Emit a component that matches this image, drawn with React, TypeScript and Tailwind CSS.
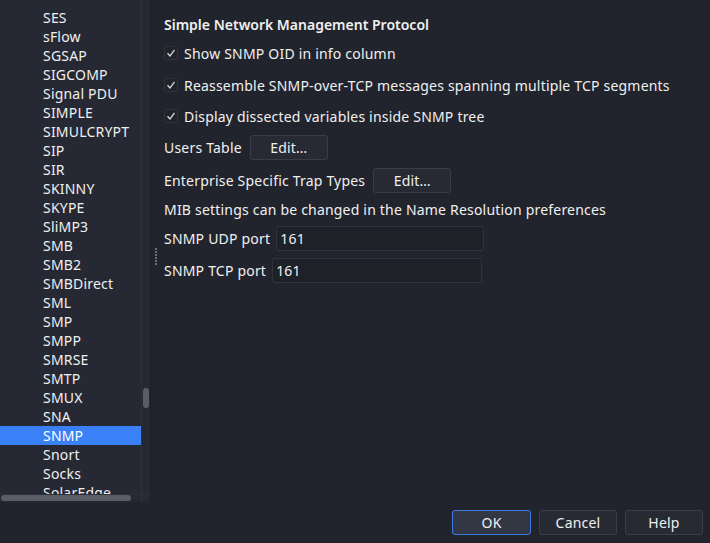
import React from "react";

const items = [
  "SES","sFlow","SGSAP","SIGCOMP","Signal PDU","SIMPLE","SIMULCRYPT","SIP","SIR","SKINNY","SKYPE","SliMP3","SMB","SMB2","SMBDirect","SML","SMP","SMPP","SMRSE","SMTP","SMUX","SNA","SNMP","Snort","Socks","SolarEdge",
];

function Check() {
  return (
    <span className="w-[14px] h-[14px] rounded-[2px] border border-[#2e313b] bg-[#21232b] flex items-center justify-center">
      <svg width="10" height="10" viewBox="0 0 10 10"><path d="M1.5 5.2 L4 8 L8.5 1.8" stroke="#d8d8d8" strokeWidth="1.3" fill="none" /></svg>
    </span>
  );
}

function Btn({ children, w, primary }: { children: React.ReactNode; w: string; primary?: boolean }) {
  return (
    <div className={`${w} h-[25px] rounded-[3px] border flex items-center justify-center ${primary ? "border-[#3d7ae0] bg-[#323744]" : "border-[#3a3d47] bg-[#272a33]"}`}>
      {children}
    </div>
  );
}

export default function App() {
  return (
    <div className="w-[710px] h-[543px] bg-[#22242d] text-[#f0f0f0] text-[14px] tracking-[0.2px] overflow-hidden relative" style={{ fontFamily: '"Noto Sans", "Open Sans", sans-serif' }}>
      <div className="flex h-[502px]">
        <div className="w-[151px] h-[502px] flex flex-col border-r border-[#1c1e25]">
          <div className="flex h-[494px]">
            <div className="w-[142px] h-[494px] overflow-hidden bg-[#262833] pt-[8px]">
              {items.map((it) => (
                <div key={it} className={`h-[19px] leading-[19px] pl-[43px] whitespace-nowrap ${it === "SNMP" ? "bg-[#3a80f6] text-white" : ""}`}>{it}</div>
              ))}
            </div>
            <div className="w-[9px] h-[494px] bg-[#262833] border-l border-[#2e303a] relative">
              <div className="absolute left-[1px] top-[388px] w-[6px] h-[20px] rounded-[3px] bg-[#5a5d66]" />
            </div>
          </div>
          <div className="flex h-[8px] bg-[#262833] border-t border-[#2e303a]">
            <div className="w-[142px] relative">
              <div className="absolute left-[1px] top-[0px] w-[130px] h-[6px] rounded-[3px] bg-[#5a5d66]" />
            </div>
            <div className="w-[9px] border-l border-[#2e303a]" />
          </div>
        </div>
        <div className="w-[10px] flex items-center justify-center">
          <div className="flex flex-col gap-[1px] mt-[10px]">
            {[0,1,2,3,4,5].map((i) => <div key={i} className="w-[2px] h-[2px] bg-[#6a6d75]" />)}
          </div>
        </div>
        <div className="flex-1 pl-[3px] pt-[15px]">
          <div className="font-semibold tracking-normal h-[20px] leading-[20px]">Simple Network Management Protocol</div>
          <div className="flex items-center gap-[6px] h-[20px] mt-[8px]"><Check /><span>Show SNMP OID in info column</span></div>
          <div className="flex items-center gap-[6px] h-[20px] mt-[12px]"><Check /><span>Reassemble SNMP-over-TCP messages spanning multiple TCP segments</span></div>
          <div className="flex items-center gap-[6px] h-[20px] mt-[11px]"><Check /><span>Display dissected variables inside SNMP tree</span></div>
          <div className="flex items-center gap-[8px] h-[24px] mt-[9px]"><span>Users Table</span><Btn w="w-[78px]">Edit…</Btn></div>
          <div className="flex items-center gap-[8px] h-[24px] mt-[9px]"><span>Enterprise Specific Trap Types</span><Btn w="w-[78px]">Edit…</Btn></div>
          <div className="h-[20px] leading-[20px] mt-[8px]">MIB settings can be changed in the Name Resolution preferences</div>
          <div className="flex items-center gap-[6px] h-[25px] mt-[6px]"><span>SNMP UDP port</span><div className="w-[208px] h-[25px] rounded-[2px] border border-[#30333c] bg-[#1f2129] pl-[3px] leading-[23px]">161</div></div>
          <div className="flex items-center gap-[6px] h-[25px] mt-[7px]"><span>SNMP TCP port</span><div className="w-[210px] h-[25px] rounded-[2px] border border-[#30333c] bg-[#1f2129] pl-[3px] leading-[23px]">161</div></div>
        </div>
      </div>
      <div className="flex justify-end gap-[8px] pr-[7px] pt-[8px]">
        <Btn w="w-[79px]" primary>OK</Btn>
        <Btn w="w-[78px]">Cancel</Btn>
        <Btn w="w-[78px]">Help</Btn>
      </div>
    </div>
  );
}
